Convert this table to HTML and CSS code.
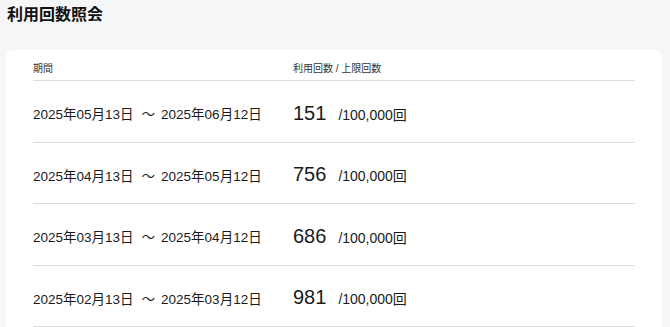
FILE: index.html
```html
<!DOCTYPE html>
<html lang="ja">
<head>
<meta charset="utf-8">
<link rel="stylesheet" href="styles.css">
</head>
<body>
<h1 class="title">利用回数照会</h1>
<div class="card">
  <div class="row head">
    <div class="c1">期間</div>
    <div class="c2">利用回数 / 上限回数</div>
  </div>
  <div class="row">
    <div class="c1">2025年05月13日<span class="tilde">～</span>2025年06月12日</div>
    <div class="c2"><span class="num">151</span><span class="lim">/100,000回</span></div>
  </div>
  <div class="row">
    <div class="c1">2025年04月13日<span class="tilde">～</span>2025年05月12日</div>
    <div class="c2"><span class="num">756</span><span class="lim">/100,000回</span></div>
  </div>
  <div class="row">
    <div class="c1">2025年03月13日<span class="tilde">～</span>2025年04月12日</div>
    <div class="c2"><span class="num">686</span><span class="lim">/100,000回</span></div>
  </div>
  <div class="row">
    <div class="c1">2025年02月13日<span class="tilde">～</span>2025年03月12日</div>
    <div class="c2"><span class="num">981</span><span class="lim">/100,000回</span></div>
  </div>
</div>
</body>
</html>
```
FILE: styles.css
```css
html, body {
  margin: 0;
  padding: 0;
  background: #f5f6f8;
  font-family: "Liberation Sans", "Noto Sans CJK JP", sans-serif;
  color: #1a1a1a;
}
.title {
  margin: 0;
  padding: 3px 0 0 7px;
  font-size: 16px;
  line-height: 24px;
  font-weight: 700;
  color: #111;
}
.card {
  margin: 23px 8px 0 6px;
  background: #fff;
  border-radius: 7px;
  padding: 0 27px 20px;
}
.row {
  display: flex;
  align-items: center;
  height: 61.5px;
  box-sizing: border-box;
  padding-top: 4px;
  border-bottom: 1px solid #dcdde0;
  font-size: 13.5px;
}
.row.head {
  height: 31px;
  padding-top: 0;
  align-items: flex-end;
  font-size: 10px;
  color: #333;
}
.row.head .c1, .row.head .c2 {
  padding-bottom: 5px;
}
.c1 {
  width: 260px;
  flex: none;
  white-space: nowrap;
}
.tilde {
  display: inline-block;
  margin: 0 6px 0 8px;
}
.c2 {
  display: flex;
  align-items: baseline;
}
.num {
  font-size: 20px;
  margin-right: 12px;
}
.lim {
  font-size: 14px;
}
```
